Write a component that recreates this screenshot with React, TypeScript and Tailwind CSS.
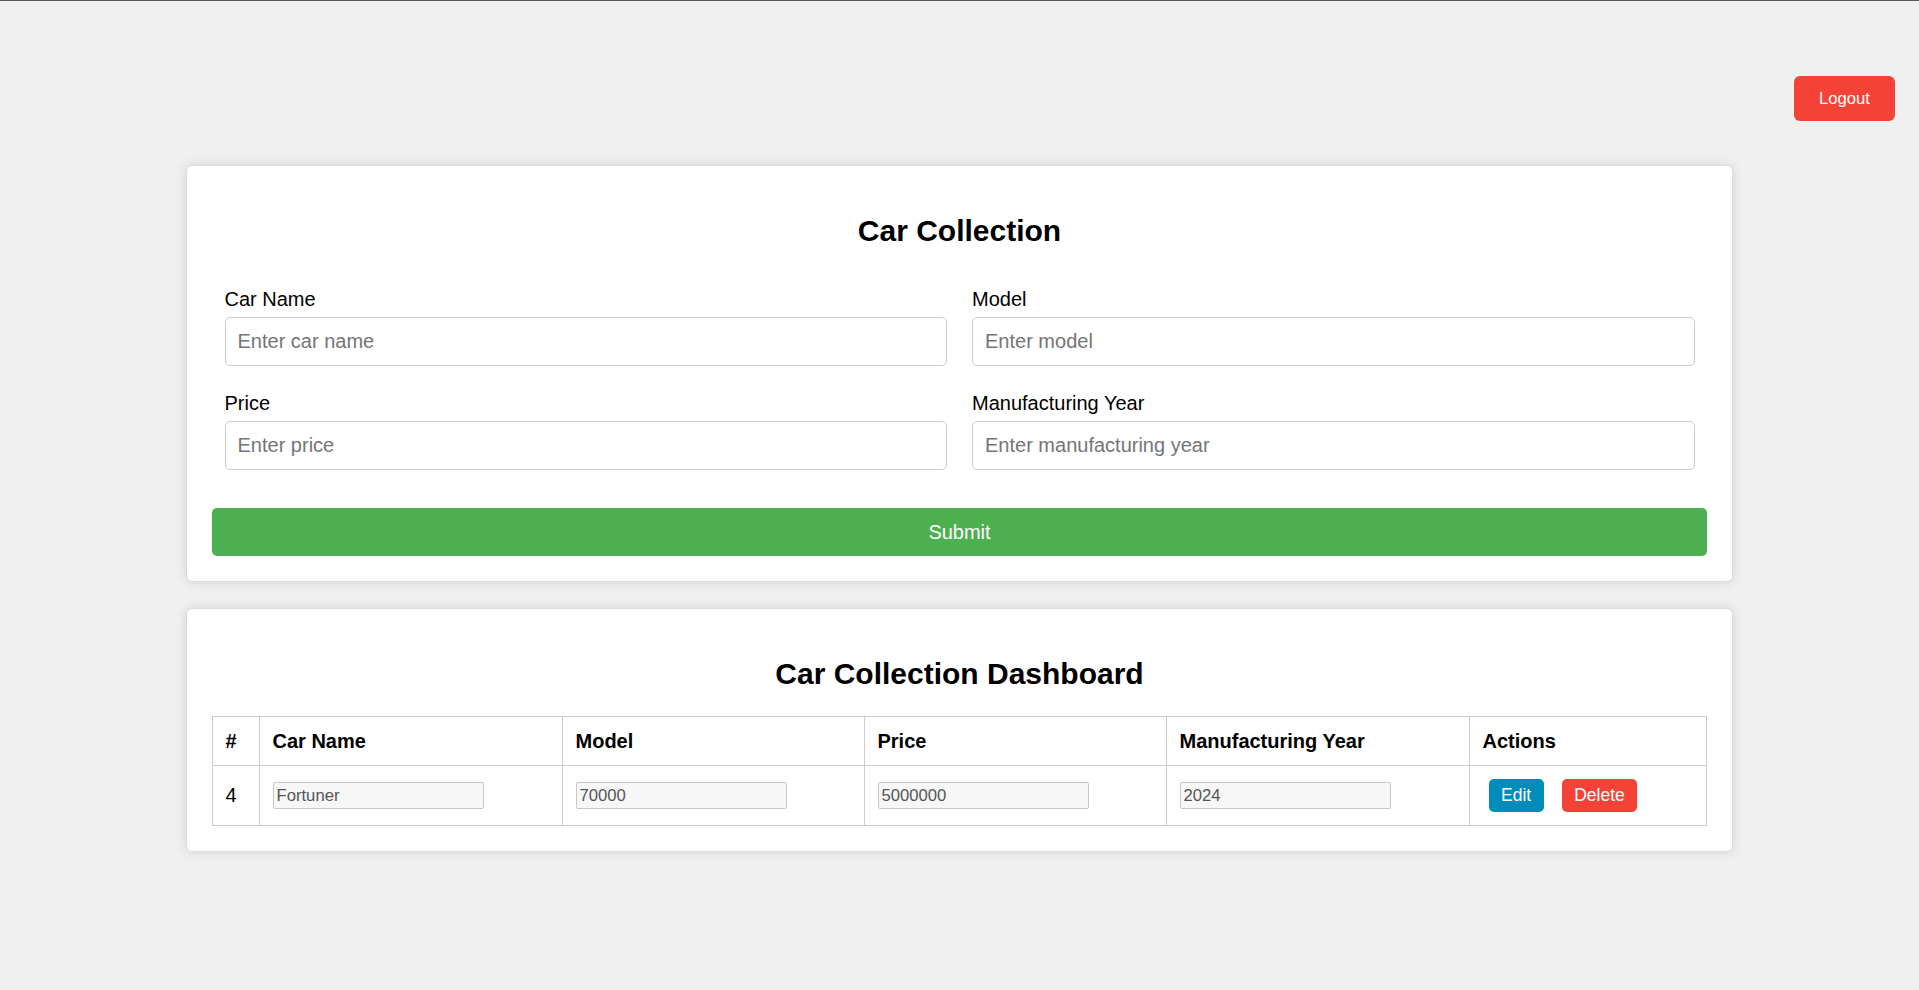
import { useState } from 'react';

interface Car {
  id: number;
  name: string;
  model: string;
  price: string;
  year: string;
}

const initialCars: Car[] = [
  { id: 4, name: 'Fortuner', model: '70000', price: '5000000', year: '2024' },
];

export default function App() {
  const [cars, setCars] = useState<Car[]>(initialCars);
  const [form, setForm] = useState({ name: '', model: '', price: '', year: '' });

  const handleChange = (field: keyof typeof form, value: string) => {
    setForm({ ...form, [field]: value });
  };

  const handleSubmit = (e: React.FormEvent) => {
    e.preventDefault();
    if (!form.name) return;
    setCars([...cars, { id: cars.length + 4, ...form }]);
    setForm({ name: '', model: '', price: '', year: '' });
  };

  const handleDelete = (id: number) => {
    setCars(cars.filter((c) => c.id !== id));
  };

  const fields: { key: keyof typeof form; label: string; placeholder: string }[] = [
    { key: 'name', label: 'Car Name', placeholder: 'Enter car name' },
    { key: 'model', label: 'Model', placeholder: 'Enter model' },
    { key: 'price', label: 'Price', placeholder: 'Enter price' },
    { key: 'year', label: 'Manufacturing Year', placeholder: 'Enter manufacturing year' },
  ];

  return (
    <div className="min-h-screen bg-[#f0f0f0] border-t border-[#5a5a5a] pb-[40px] font-['Liberation_Sans',Arial,sans-serif] text-black">
      <div className="flex justify-end pt-[75px] pr-[24px]">
        <button className="h-[45px] px-[25px] bg-[#f44336] text-white text-[16.67px] rounded-[6px]">
          Logout
        </button>
      </div>

      <div className="w-[1547px] mx-auto mt-[44px] bg-white border border-[#dcdcdc] rounded-[6px] shadow-[0_0_12px_rgba(0,0,0,0.12)] p-[25px]">
        <h2 className="text-[30px] leading-[35px] font-bold text-center mt-[22px] mb-[25px]">Car Collection</h2>
        <form onSubmit={handleSubmit}>
          <div className="grid grid-cols-2 gap-x-[25px] px-[12.5px] pt-[15px] pb-[12px]">
            {fields.map((f) => (
              <div key={f.key} className="mb-[26px]">
                <label className="block text-[20px] leading-[23px] mb-[6px]">{f.label}</label>
                <input
                  type="text"
                  value={form[f.key]}
                  onChange={(e) => handleChange(f.key, e.target.value)}
                  placeholder={f.placeholder}
                  className="w-full h-[49px] px-[12px] border border-[#cccccc] rounded-[5px] text-[20px] placeholder:text-[#757575] outline-none"
                />
              </div>
            ))}
          </div>
          <button
            type="submit"
            className="w-full h-[48px] bg-[#4caf50] text-white text-[20px] rounded-[5px]"
          >
            Submit
          </button>
        </form>
      </div>

      <div className="w-[1547px] mx-auto mt-[26px] bg-white border border-[#dcdcdc] rounded-[6px] shadow-[0_0_12px_rgba(0,0,0,0.12)] p-[25px]">
        <h2 className="text-[30px] leading-[35px] font-bold text-center mt-[22px] mb-[25px]">
          Car Collection Dashboard
        </h2>
        <table className="w-full table-fixed border-collapse text-[20px] leading-[23px]">
          <colgroup>
            <col className="w-[47px]" />
            <col className="w-[303px]" />
            <col className="w-[302px]" />
            <col className="w-[302px]" />
            <col className="w-[303px]" />
            <col />
          </colgroup>
          <thead>
            <tr>
              {['#', 'Car Name', 'Model', 'Price', 'Manufacturing Year', 'Actions'].map((h) => (
                <th key={h} className="border border-[#cccccc] px-[12.5px] py-[12.5px] text-left font-bold">
                  {h}
                </th>
              ))}
            </tr>
          </thead>
          <tbody>
            {cars.map((car) => (
              <tr key={car.id}>
                <td className="border border-[#cccccc] px-[12.5px] py-[12.5px] align-middle">{car.id}</td>
                {[car.name, car.model, car.price, car.year].map((v, i) => (
                  <td key={i} className="border border-[#cccccc] px-[12.5px] py-[12.5px] align-middle">
                    <input
                      type="text"
                      readOnly
                      value={v}
                      className="block w-[211px] h-[27px] px-[3px] border border-[#c8c8c8] rounded-[2px] bg-[#f7f7f7] text-[#545454] text-[16.67px] outline-none"
                    />
                  </td>
                ))}
                <td className="border border-[#cccccc] px-[12.5px] py-[12.5px] align-middle">
                  <div className="flex items-center h-[34px] gap-[18px] pl-[6px]">
                    <button className="h-[33px] px-[12.5px] bg-[#008cba] text-white text-[17.5px] rounded-[5px]">
                      Edit
                    </button>
                    <button
                      onClick={() => handleDelete(car.id)}
                      className="h-[33px] px-[12.5px] bg-[#f44336] text-white text-[17.5px] rounded-[5px]"
                    >
                      Delete
                    </button>
                  </div>
                </td>
              </tr>
            ))}
          </tbody>
        </table>
      </div>
    </div>
  );
}
